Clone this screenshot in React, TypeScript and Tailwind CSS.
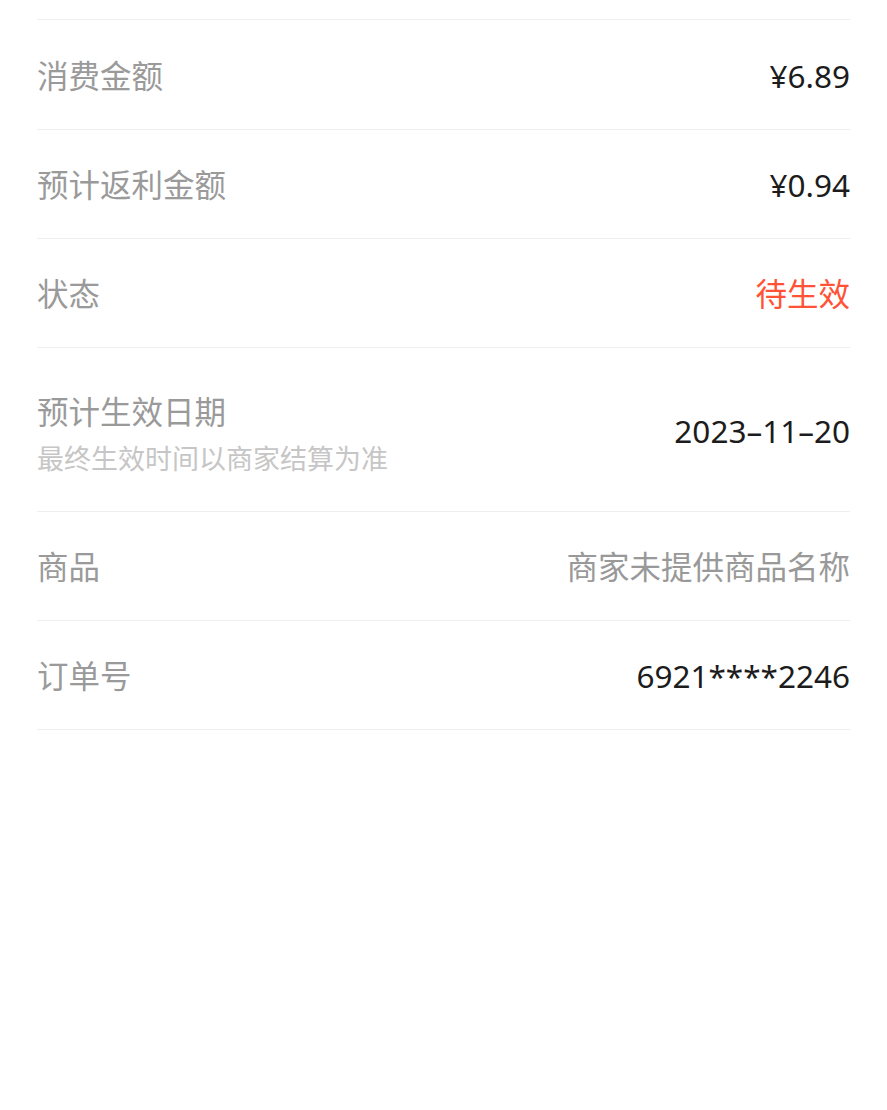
const rows: { label: string; value: string; tone: "dark" | "red" | "grey" }[] = [
  { label: "消费金额", value: "¥6.89", tone: "dark" },
  { label: "预计返利金额", value: "¥0.94", tone: "dark" },
  { label: "状态", value: "待生效", tone: "red" },
];

const tail: { label: string; value: string; tone: "dark" | "red" | "grey" }[] = [
  { label: "商品", value: "商家未提供商品名称", tone: "grey" },
  { label: "订单号", value: "6921****2246", tone: "dark" },
];

const toneClass = {
  dark: "text-[#1c1c1c]",
  red: "text-[#ff5236]",
  grey: "text-[#999999]",
};

function Row({ label, value, tone, first }: { label: string; value: string; tone: "dark" | "red" | "grey"; first?: boolean }) {
  return (
    <div
      className={`flex items-center justify-between border-b border-[#efefef] pt-[2px] ${
        first ? "h-[110px]" : "h-[109px]"
      }`}
    >
      <span className="text-[31.5px] text-[#9a9a9a]">{label}</span>
      <span className={`text-[31.5px] ${toneClass[tone]}`}>{value}</span>
    </div>
  );
}

export default function App() {
  return (
    <div
      className="min-h-[1110px] bg-white px-[37px]"
      style={{ fontFamily: '"Noto Sans", "Noto Sans CJK SC", sans-serif' }}
    >
      {/* top divider from the row cut off above */}
      <div className="h-[20px] border-b border-[#efefef]" />

      {rows.map((r, i) => (
        <Row key={r.label} {...r} first={i === 0} />
      ))}

      {/* date row with hint */}
      <div className="flex h-[164px] items-center justify-between border-b border-[#efefef]">
        <div className="flex flex-col pt-[8px]">
          <span className="text-[31.5px] leading-[44px] text-[#9a9a9a]">预计生效日期</span>
          <span className="mt-[6px] text-[27px] leading-[38px] text-[#c6c6c6]">最终生效时间以商家结算为准</span>
        </div>
        <span className="pt-[2px] text-[31.5px] text-[#1c1c1c]">2023–11–20</span>
      </div>

      {tail.map((r) => (
        <Row key={r.label} {...r} />
      ))}
    </div>
  );
}
